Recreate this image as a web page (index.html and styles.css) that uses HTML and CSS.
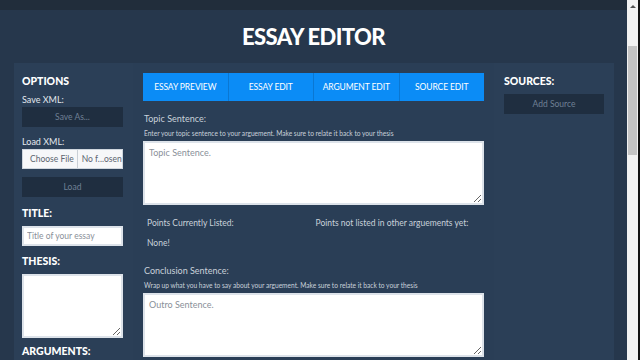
FILE: index.html
```html
<!DOCTYPE html>
<html lang="en">
<head>
    <meta charset="UTF-8">
    <title>Essay Editor</title>
    <link rel="stylesheet" href="styles.css">
</head>
<body>
    <div class="top-strip"></div>
    <h1>ESSAY EDITOR</h1>

    <div class="main-container">
        <!-- Options column -->
        <div class="left-column">
            <div class="section-title">OPTIONS</div>
            <label class="small-label">Save XML:</label>
            <button class="dark-btn">Save As...</button>
            <label class="small-label">Load XML:</label>
            <div class="file-input">
                <span class="file-btn">Choose File</span>
                <span class="file-name">No f...osen</span>
            </div>
            <button class="dark-btn">Load</button>

            <div class="section-title">TITLE:</div>
            <input class="text-input" type="text" placeholder="Title of your essay">

            <div class="section-title">THESIS:</div>
            <textarea class="thesis-box"></textarea>

            <div class="section-title">ARGUMENTS:</div>
        </div>

        <!-- Editor column -->
        <div class="middle-column">
            <div class="tabs">
                <div class="tab">ESSAY PREVIEW</div>
                <div class="tab">ESSAY EDIT</div>
                <div class="tab">ARGUMENT EDIT</div>
                <div class="tab">SOURCE EDIT</div>
            </div>

            <div class="field-label">Topic Sentence:</div>
            <div class="help-text">Enter your topic sentence to your arguement. Make sure to relate it back to your thesis</div>
            <textarea class="sentence-box" placeholder="Topic Sentence."></textarea>

            <div class="points-row">
                <div class="points-col">
                    <div class="points-head">Points Currently Listed:</div>
                    <div class="points-none">None!</div>
                </div>
                <div class="points-col">
                    <div class="points-head">Points not listed in other arguements yet:</div>
                </div>
            </div>

            <div class="field-label">Conclusion Sentence:</div>
            <div class="help-text">Wrap up what you have to say about your arguement. Make sure to relate it back to your thesis</div>
            <textarea class="sentence-box" placeholder="Outro Sentence."></textarea>
        </div>

        <!-- Sources column -->
        <div class="right-column">
            <div class="section-title">SOURCES:</div>
            <button class="dark-btn">Add Source</button>
        </div>
    </div>

    <!-- fake window scrollbar -->
    <div class="scrollbar">
        <div class="scroll-arrow"></div>
        <div class="scroll-thumb"></div>
    </div>
</body>
</html>
```

FILE: styles.css
```css
* {
    box-sizing: border-box;
    margin: 0;
    padding: 0;
}

body {
    font-family: "Source Sans Pro", Lato, "Open Sans", sans-serif;
    background-color: #26374c;
    color: #dfe5ec;
    width: 627px;
    height: 360px;
    overflow: hidden;
}

.top-strip {
    height: 10px;
    background: #212d3b;
}

h1 {
    text-align: center;
    font-size: 22px;
    line-height: 26px;
    font-weight: 900;
    color: #fff;
    letter-spacing: -0.6px;
    height: 53px;
    padding-top: 14px;
}

.main-container {
    display: flex;
    margin: 0 13px 0 14px;
    height: 300px;
    background: #2b3f57;
}

.left-column {
    width: 119px;
    padding: 11px 10px 0 8px;
}

.middle-column {
    width: 361px;
    padding: 10px 10px 0 10px;
    background: #2a3e56;
}

.right-column {
    flex: 1;
    padding: 11px 10px 0 10px;
}

.section-title {
    font-size: 10.5px;
    line-height: 14px;
    font-weight: 900;
    color: #fff;
    margin-bottom: 6px;
}

.left-column .section-title {
    margin-top: 3px;
}

.left-column .section-title:first-child {
    margin-top: 0;
}

.small-label {
    display: block;
    font-size: 9px;
    line-height: 11px;
    color: #e3e8ee;
    margin: 3px 0 2px;
}

.dark-btn {
    display: block;
    width: 100%;
    height: 20px;
    border: none;
    background: #1f2e40;
    color: #6f8095;
    font-family: inherit;
    font-size: 8.5px;
    margin-bottom: 9px;
}

.file-input {
    display: flex;
    height: 20px;
    background: #f6f7f9;
    border: 1px solid #cfd6de;
    font-size: 8.5px;
    color: #5c6570;
    margin-bottom: 8px;
}

.file-btn {
    padding: 4px 3px 0 7px;
    border-right: 1px solid #c9cfd6;
}

.file-name {
    padding: 4px 0 0 4px;
}

.text-input {
    display: block;
    width: 100%;
    height: 20px;
    border: 2px solid #dde3ea;
    padding: 0 3px;
    font-family: inherit;
    font-size: 8.5px;
    background: #fff;
    margin-bottom: 8px;
}

.text-input::placeholder,
.sentence-box::placeholder {
    color: #8a9099;
}

.thesis-box {
    display: block;
    width: 100%;
    height: 64px;
    border: 2px solid #dde3ea;
    background: #fff;
    resize: vertical;
    margin-bottom: 6px;
}

.tabs {
    display: flex;
    height: 28px;
    background: #0b8cf6;
}

.tab {
    flex: 1;
    display: flex;
    align-items: center;
    justify-content: center;
    font-size: 8.5px;
    color: #fff;
    letter-spacing: -0.1px;
    border-left: 1px solid #0a77d2;
}

.tab:first-child {
    border-left: none;
}

.field-label {
    font-size: 9px;
    line-height: 11px;
    color: #c9d1da;
    margin: 12px 0 5px 1px;
}

.help-text {
    font-size: 6.6px;
    line-height: 8px;
    color: #c9d1da;
    margin: 0 0 4px 1px;
    white-space: nowrap;
}

.sentence-box {
    display: block;
    width: 100%;
    height: 64px;
    border: 2px solid #dde3ea;
    background: #fff;
    padding: 4px;
    font-family: inherit;
    font-size: 9px;
    resize: vertical;
}

.points-row {
    display: flex;
    padding: 13px 0 0 4px;
    height: 48px;
}

.points-col {
    width: 170px;
}

.points-head,
.points-none {
    font-size: 8.5px;
    line-height: 11px;
    color: #c9d1da;
}

.points-head {
    margin-bottom: 9px;
}

.scrollbar {
    position: fixed;
    top: 0;
    right: 0;
    width: 13px;
    height: 360px;
    background: #f1f1f1;
    border-right: 2px solid #111;
}

.scroll-arrow {
    margin: 5px auto 0;
    width: 0;
    height: 0;
    border-left: 3px solid transparent;
    border-right: 3px solid transparent;
    border-bottom: 3px solid #505050;
}

.scroll-thumb {
    position: absolute;
    top: 46px;
    left: 1px;
    width: 9px;
    height: 109px;
    background: #c4c4c4;
}
```
